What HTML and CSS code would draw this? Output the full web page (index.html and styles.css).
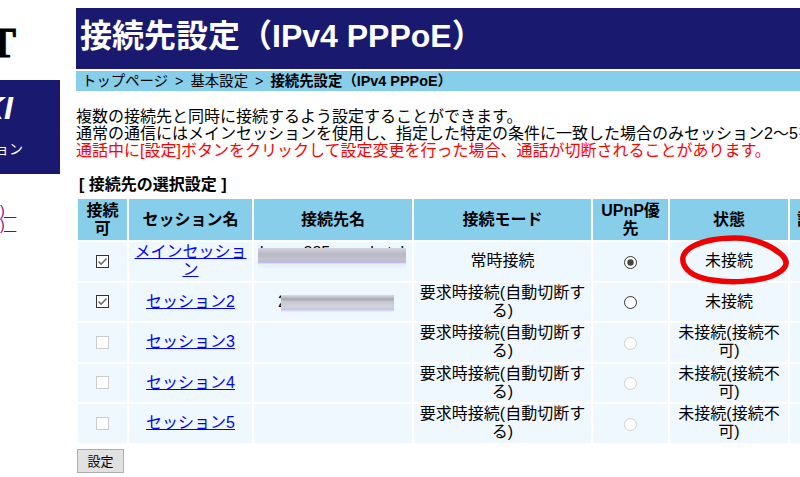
FILE: index.html
```html
<!DOCTYPE html>
<html lang="ja">
<head>
    <meta charset="UTF-8">
    <title>接続先設定（IPv4 PPPoE）</title>
    <link rel="stylesheet" href="styles.css">
</head>
<body>
    <div class="page">
        <div class="side">
            <div class="logo">T</div>
            <div class="side-box">
                <div class="side-brand">KI</div>
                <div class="side-sub">ョン</div>
            </div>
            <div class="side-links">
                <a href="#">)&nbsp;&nbsp;&nbsp;</a>
                <a href="#">)&nbsp;&nbsp;&nbsp;</a>
            </div>
        </div>

        <div class="main">
            <h1>接続先設定（IPv4 PPPoE）</h1>
            <div class="crumb">トップページ &gt; 基本設定 &gt; <b>接続先設定（IPv4 PPPoE）</b></div>

            <div class="intro">
                複数の接続先と同時に接続するよう設定することができます。<br>
                通常の通信にはメインセッションを使用し、指定した特定の条件に一致した場合のみセッション2～5を使用します。<br>
                <span class="warn">通話中に[設定]ボタンをクリックして設定変更を行った場合、通話が切断されることがあります。</span>
            </div>

            <h2>[ 接続先の選択設定 ]</h2>

            <table class="sessions">
                <colgroup>
                    <col class="c-able"><col class="c-name"><col class="c-dest"><col class="c-mode"><col class="c-upnp"><col class="c-state"><col class="c-edit">
                </colgroup>
                <tr>
                    <th>接続可</th>
                    <th>セッション名</th>
                    <th>接続先名</th>
                    <th>接続モード</th>
                    <th>UPnP優先</th>
                    <th>状態</th>
                    <th>設定</th>
                </tr>
                <tr>
                    <td><svg class="box" viewBox="0 0 13 13"><rect x="0.5" y="0.5" width="12" height="12" fill="#fff" stroke="#333"/><path d="M2.5 6.5 5.2 9.2 10.5 3.6" fill="none" stroke="#666" stroke-width="1.5"/></svg></td>
                    <td><a href="#">メインセッション</a></td>
                    <td class="dest">
                        <div class="peek-line">k        885         k  t  k  (</div>
                        <div class="smear smear-main"></div>
                    </td>
                    <td>常時接続</td>
                    <td><svg class="dot" viewBox="0 0 13 13"><circle cx="6.5" cy="6.5" r="6" fill="#fff" stroke="#333"/><circle cx="6.5" cy="6.5" r="3.2" fill="#444"/></svg></td>
                    <td>未接続</td>
                    <td></td>
                </tr>
                <tr>
                    <td><svg class="box" viewBox="0 0 13 13"><rect x="0.5" y="0.5" width="12" height="12" fill="#fff" stroke="#333"/><path d="M2.5 6.5 5.2 9.2 10.5 3.6" fill="none" stroke="#666" stroke-width="1.5"/></svg></td>
                    <td><a href="#">セッション2</a></td>
                    <td class="dest dest-row">
                        <span class="peek-char">2</span>
                        <div class="smear smear-two"></div>
                    </td>
                    <td>要求時接続(自動切断する)</td>
                    <td><svg class="dot" viewBox="0 0 13 13"><circle cx="6.5" cy="6.5" r="6" fill="#fff" stroke="#333"/></svg></td>
                    <td>未接続</td>
                    <td></td>
                </tr>
                <tr>
                    <td><svg class="box" viewBox="0 0 13 13"><rect x="0.5" y="0.5" width="12" height="12" fill="#fff" stroke="#ccc"/></svg></td>
                    <td><a href="#">セッション3</a></td>
                    <td></td>
                    <td>要求時接続(自動切断する)</td>
                    <td><svg class="dot" viewBox="0 0 13 13"><circle cx="6.5" cy="6.5" r="6" fill="#fff" stroke="#ccc"/></svg></td>
                    <td>未接続(接続不可)</td>
                    <td></td>
                </tr>
                <tr>
                    <td><svg class="box" viewBox="0 0 13 13"><rect x="0.5" y="0.5" width="12" height="12" fill="#fff" stroke="#ccc"/></svg></td>
                    <td><a href="#">セッション4</a></td>
                    <td></td>
                    <td>要求時接続(自動切断する)</td>
                    <td><svg class="dot" viewBox="0 0 13 13"><circle cx="6.5" cy="6.5" r="6" fill="#fff" stroke="#ccc"/></svg></td>
                    <td>未接続(接続不可)</td>
                    <td></td>
                </tr>
                <tr>
                    <td><svg class="box" viewBox="0 0 13 13"><rect x="0.5" y="0.5" width="12" height="12" fill="#fff" stroke="#ccc"/></svg></td>
                    <td><a href="#">セッション5</a></td>
                    <td></td>
                    <td>要求時接続(自動切断する)</td>
                    <td><svg class="dot" viewBox="0 0 13 13"><circle cx="6.5" cy="6.5" r="6" fill="#fff" stroke="#ccc"/></svg></td>
                    <td>未接続(接続不可)</td>
                    <td></td>
                </tr>
            </table>

            <button class="save">設定</button>
        </div>
    </div>

    <!-- red marker circle drawn over the screenshot -->
    <svg class="marker" viewBox="0 0 800 477">
        <path d="M690 248 C703 240 720 238 735 238 C755 238 772 246 782 255 C790 263 786 270 772 276 C755 282 730 283 712 280 C698 278 688 273 684 265 C681 258 684 252 690 248" fill="none" stroke="#f00000" stroke-width="5.5" stroke-linecap="round"/>
    </svg>
</body>
</html>
```

FILE: styles.css
```css
html, body {
    margin: 0;
    padding: 0;
    height: 100%;
    overflow: hidden;
    background-color: #fff;
}

body {
    font-family: "Liberation Sans", "Noto Sans CJK JP", sans-serif;
    font-size: 16px;
    line-height: 17px;
    color: #000;
}

.page {
    display: flex;
    width: 1100px;
}

/* left menu, mostly scrolled out of view */
.side {
    flex: none;
    width: 60px;
    margin-right: 16px;
}

.logo {
    display: flex;
    justify-content: flex-end;
    width: 16px;
    height: 80px;
    padding-top: 18px;
    box-sizing: border-box;
    font-family: "Liberation Serif", serif;
    font-size: 42px;
    font-weight: bold;
    line-height: 50px;
    -webkit-text-stroke: 1px #000;
}

.side-box {
    height: 94px;
    box-sizing: border-box;
    padding-top: 16px;
    background-color: #191970;
    color: #fff;
}

.side-brand {
    display: flex;
    justify-content: flex-end;
    width: 13px;
    height: 24px;
    font-size: 32px;
    line-height: 24px;
    font-weight: bold;
    font-style: italic;
    white-space: nowrap;
}

.side-sub {
    display: flex;
    justify-content: flex-end;
    margin-top: 21px;
    width: 23px;
    font-size: 14px;
    line-height: 16px;
    white-space: nowrap;
}

.side-links {
    display: flex;
    flex-direction: column;
    align-items: flex-start;
    margin-top: 30px;
    font-size: 14px;
    line-height: 14px;
}

.side-links a {
    color: #800080;
}

.main {
    flex: none;
    width: 1000px;
    padding-top: 8px;
}

h1 {
    margin: 0;
    height: 61px;
    padding-left: 4px;
    background-color: #191970;
    color: #fff;
    font-size: 32px;
    line-height: 57px;
    font-weight: bold;
}

.crumb {
    margin-top: 2px;
    height: 20px;
    padding-left: 6px;
    background-color: #87ceeb;
    font-size: 14.4px;
    line-height: 20px;
    word-spacing: 3px;
}

.crumb b {
    word-spacing: 0;
}

.intro {
    margin-top: 17px;
    white-space: nowrap;
}

.warn {
    color: #f00;
}

h2 {
    margin: 17px 0 0 3px;
    font-size: 16px;
    line-height: 18px;
    font-weight: bold;
}

.sessions {
    margin-top: 3px;
    table-layout: fixed;
    width: 762px;
    border-collapse: separate;
    border-spacing: 2px;
}

.c-able { width: 49px; }
.c-name { width: 123px; }
.c-dest { width: 158px; }
.c-mode { width: 177px; }
.c-upnp { width: 75px; }
.c-state { width: 118px; }
.c-edit { width: 46px; }

th, td {
    padding: 0 2px;
    text-align: center;
    vertical-align: middle;
    line-height: 18px;
}

th {
    height: 41px;
    background-color: #87ceeb;
    font-weight: bold;
}

td {
    height: 38.5px;
    background-color: #f0f8ff;
}

.sessions a {
    color: #00f;
}

.box, .dot {
    display: block;
    width: 13px;
    height: 13px;
    margin: 0 auto;
}

.dot {
    margin-top: 2px;
}

/* blurred-out connection names */
.dest {
    padding: 0;
    vertical-align: top;
    text-align: left;
}

.peek-line {
    height: 4px;
    margin: 2px 0 0 6px;
    overflow: hidden;
    line-height: 18px;
    white-space: pre;
}

.smear {
    filter: blur(0.6px);
}

.smear-main {
    width: 148px;
    height: 20px;
    margin-left: 4px;
    background: linear-gradient(#d5d5de 0, #b9b9c6 30%, #c2c2c8 60%, #b8b8f0 72%, #e8ecf4 80%, #eef3fa 100%);
}

.peek-char {
    float: left;
    width: 3px;
    margin: 10px 0 0 24px;
    overflow: hidden;
}

.smear-two {
    float: left;
    width: 113px;
    height: 17px;
    margin-top: 12px;
    background: linear-gradient(#dcdce4 0, #a8a8b4 25%, #c9c9d2 40%, #d2d2da 70%, #c4c4f0 85%, #eef3fa 100%);
}

.save {
    display: block;
    margin: 4px 0 0 1px;
    width: 47px;
    height: 24px;
    padding: 0;
    background-color: #e1e1e1;
    border: 1px solid #adadad;
    font-family: "Liberation Sans", "Noto Sans CJK JP", sans-serif;
    font-size: 13px;
    color: #000;
}

.marker {
    position: absolute;
    left: 0;
    top: 0;
    width: 800px;
    height: 477px;
    pointer-events: none;
}
```
